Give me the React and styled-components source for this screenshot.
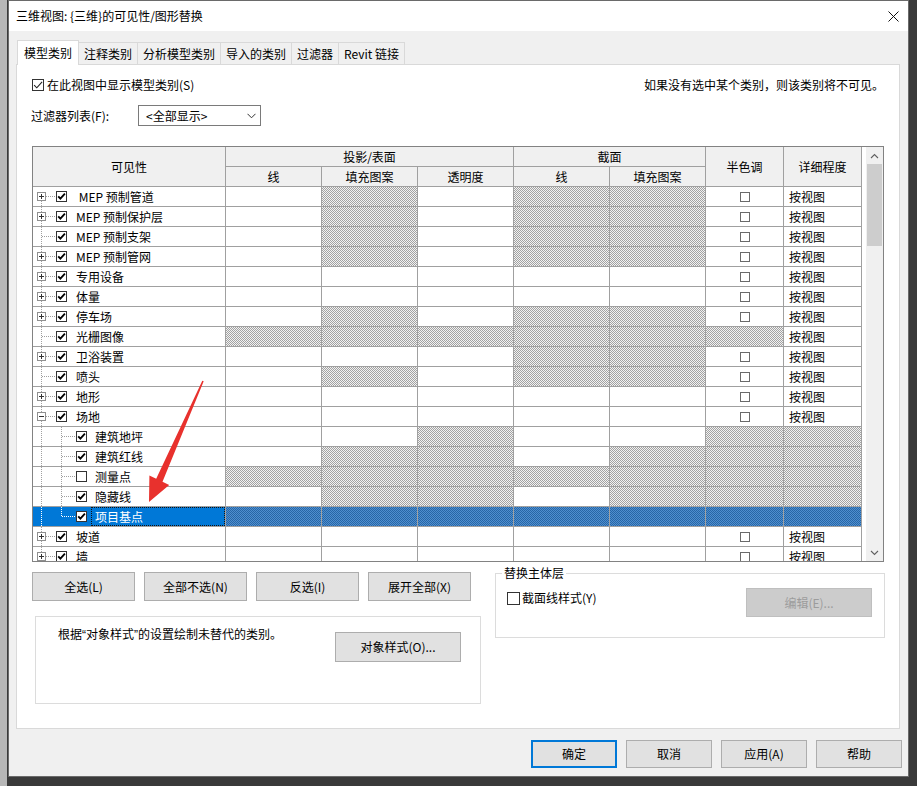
import React from 'react';
import styled, { createGlobalStyle, css } from 'styled-components';

const FONT = `"Noto Sans CJK SC", "Microsoft YaHei", "Noto Sans", sans-serif`;

const GlobalStyle = createGlobalStyle`
  *, *::before, *::after { box-sizing: border-box; }
  html, body { margin: 0; padding: 0; }
  body {
    width: 917px;
    height: 786px;
    overflow: hidden;
    background: linear-gradient(to right, #b7b7b7 0 7px, #3a3a3a 7px);
    font-family: ${FONT};
    font-size: 12px;
    color: #000;
  }
`;

const hatch = (a, b) => `repeating-conic-gradient(${a} 0 25%, ${b} 0 50%) 0 0 / 2px 2px`;
const GRAY_HATCH = hatch('#a2a2a2', '#f2f2f2');
const BLUE_HATCH = hatch('#2766a6', '#4f8fcf');
const COLS = '193px 96px 96px 96px 96px 96px 78px 78px';

const Desktop = styled.div`
  position: relative;
  width: 917px;
  height: 786px;
  padding-left: 8px;
`;

const Dialog = styled.div`
  width: 901px;
  height: 777px;
  border: 1px solid #6a6a6a;
  background: #f0f0f0;
  display: flex;
  flex-direction: column;
`;

const TitleBar = styled.div`
  flex: none;
  height: 30px;
  background: #fff;
  display: flex;
  align-items: center;
  justify-content: space-between;
  padding: 0 9px 0 7px;
  line-height: 16px;
`;

const DialogBody = styled.div`
  display: flex;
  flex-direction: column;
  padding: 9px 8px 0 7px;
`;

const TabStrip = styled.div`
  display: flex;
  align-items: flex-end;
  height: 24px;
  padding-left: 1px;
`;

const Tab = styled.div`
  position: relative;
  z-index: ${p => (p.$active ? 2 : 1)};
  display: flex;
  align-items: center;
  height: ${p => (p.$active ? 25 : 22)}px;
  margin-bottom: ${p => (p.$active ? -1 : 0)}px;
  margin-left: ${p => (p.$first ? 0 : -1)}px;
  padding: 0 ${p => (p.$active ? 6 : 5)}px;
  background: ${p => (p.$active ? '#fff' : '#f0f0f0')};
  border: 1px solid #d9d9d9;
  border-bottom: none;
  line-height: 16px;
  white-space: nowrap;
`;

const Panel = styled.div`
  height: 665px;
  background: #fff;
  border: 1px solid #d9d9d9;
  padding: 0 15px;
  display: flex;
  flex-direction: column;
`;

const TopRow = styled.div`
  margin-top: 10px;
  height: 20px;
  display: flex;
  align-items: center;
  justify-content: space-between;
  line-height: 16px;
`;

const CheckLabel = styled.label`
  display: flex;
  align-items: center;
  gap: ${p => p.$gap || 3}px;
  line-height: 16px;
  margin-top: ${p => p.$mt || 0}px;
`;

const Note = styled.span`
  padding-right: 0;
`;

const FilterRow = styled.div`
  margin-top: 10px;
  height: 21px;
  display: flex;
  align-items: center;
  line-height: 16px;
`;

const FilterLabel = styled.span`
  width: 107px;
  margin-left: -1px;
`;

const Select = styled.div`
  width: 123px;
  height: 21px;
  border: 1px solid #7a7a7a;
  background: #fff;
  display: flex;
  align-items: center;
  justify-content: space-between;
  padding: 0 4px 0 7px;
`;

const Box = styled.span`
  flex: none;
  display: inline-flex;
  align-items: center;
  justify-content: center;
  width: ${p => p.$size}px;
  height: ${p => p.$size}px;
  border: 1px solid ${p => p.$border || '#333'};
  background: #fff;
`;

/* ---------- table ---------- */

const TableFrame = styled.div`
  flex: none;
  margin-top: 20px;
  width: 852px;
  height: 416px;
  border: 1px solid #828282;
  background: #fff;
  display: flex;
`;

const GridArea = styled.div`
  width: 829px;
  display: flex;
  flex-direction: column;
  overflow: hidden;
`;

const HeaderGrid = styled.div`
  flex: none;
  display: grid;
  grid-template-columns: ${COLS};
  grid-template-rows: 20px 20px;
`;

const HeadCell = styled.div`
  grid-column: ${p => p.$col};
  grid-row: ${p => p.$row};
  background: #f0f0f0;
  border-right: 1px solid #a0a0a0;
  border-bottom: 1px solid #a0a0a0;
  display: flex;
  align-items: center;
  justify-content: center;
  line-height: 16px;
`;

const BodyRows = styled.div`
  flex: 1;
  overflow: hidden;
`;

const Row = styled.div`
  display: grid;
  grid-template-columns: ${COLS};
  height: 20px;
`;

const Cell = styled.div`
  border-right: 1px solid #a0a0a0;
  border-bottom: 1px solid #a0a0a0;
  display: flex;
  align-items: center;
  justify-content: ${p => (p.$center ? 'center' : 'flex-start')};
  padding-left: ${p => (p.$pad ? 5 : 0)}px;
  line-height: 16px;
  white-space: nowrap;
  ${p => p.$hatch && css`background: ${p.$selected ? BLUE_HATCH : GRAY_HATCH};`}
  ${p => !p.$hatch && css`background: ${p.$selected ? '#0078d7' : '#fff'};`}
`;

const VisCell = styled(Cell)`
  color: ${p => (p.$selected ? '#fff' : '#000')};
  overflow: hidden;
`;

const RowLabel = styled.span`
  flex: 1;
  align-self: stretch;
  display: flex;
  align-items: center;
  margin-left: ${p => (p.$focus ? 4 : 9)}px;
  padding-left: ${p => (p.$focus ? 3 : 0)}px;
  border: ${p => (p.$focus ? '1px dotted #111' : 'none')};
  ${p => p.$child && !p.$focus && css`margin-left: 8px;`}
`;

const GuideSvg = styled.svg`
  flex: none;
  display: block;
`;

const ScrollGap = styled.div`
  width: 4px;
  background: #fff;
`;

const ScrollBar = styled.div`
  width: 17px;
  background: #f0f0f0;
  display: flex;
  flex-direction: column;
`;

const ScrollArrow = styled.div`
  height: 17px;
  flex: none;
  display: flex;
  align-items: center;
  justify-content: center;
`;

const Thumb = styled.div`
  height: 82px;
  margin: 0 1px;
  background: #cdcdcd;
`;

const ScrollSpace = styled.div`
  flex: 1;
`;

/* ---------- lower area ---------- */

const Lower = styled.div`
  display: flex;
  margin-right: -1px;
`;

const LeftCol = styled.div`
  width: 449px;
  display: flex;
  flex-direction: column;
`;

const ButtonRow = styled.div`
  margin-top: 10px;
  display: flex;
  gap: 9px;
`;

const Btn = styled.button`
  flex: none;
  width: ${p => p.$w}px;
  height: ${p => p.$h}px;
  padding: 0;
  font-family: ${FONT};
  font-size: 12px;
  line-height: 16px;
  color: #000;
  background: #e1e1e1;
  border: ${p => (p.$default ? '2px solid #0078d7' : '1px solid #adadad')};
  &:disabled {
    background: #cccccc;
    border-color: #bfbfbf;
    color: #9c9c9c;
  }
`;

const InfoBox = styled.div`
  margin: 15px 0 0 3px;
  width: 446px;
  height: 88px;
  border: 1px solid #dcdcdc;
  display: flex;
  align-items: flex-start;
  padding: 0 19px 0 22px;
`;

const InfoText = styled.div`
  padding-top: 9px;
  line-height: 16px;
`;

const Quote = styled.span`
  font-family: "Liberation Sans", Arial, sans-serif;
`;

const InfoButton = styled(Btn)`
  margin-top: 15px;
  margin-left: auto;
`;

const RightCol = styled.div`
  margin-left: 14px;
  width: 390px;
`;

const Group = styled.fieldset`
  margin: 4px 0 0 0;
  padding: 8px 12px 0 11px;
  min-inline-size: 0;
  width: 390px;
  height: 72px;
  border: 1px solid #dcdcdc;
`;

const GroupLegend = styled.legend`
  padding: 0 2px;
  margin-left: -5px;
  font-size: 12px;
  line-height: 14px;
`;

const GroupRow = styled.div`
  display: flex;
  justify-content: space-between;
  align-items: flex-start;
`;

const Footer = styled.div`
  margin-top: 11px;
  margin-right: -2px;
  height: 28px;
  display: flex;
  justify-content: flex-end;
  gap: 9px;
`;

const ArrowOverlay = styled.svg`
  position: absolute;
  left: 140px;
  top: 375px;
  pointer-events: none;
  overflow: visible;
`;

/* ---------- pieces ---------- */

function Check({ checked, size = 11, bold = true, border }) {
  const inner = size - 2;
  return (
    <Box $size={size} $border={border}>
      {checked && (
        <svg width={inner} height={inner} viewBox="0 0 9 9">
          {bold ? (
            <path d="M1.2 4.3 L3.4 6.7 L7.9 1.6" fill="none" stroke="#000" strokeWidth="1.8" />
          ) : (
            <path d="M1 4.6 L3.4 7 L8.2 1.6" fill="none" stroke="#222" strokeWidth="1" />
          )}
        </svg>
      )}
    </Box>
  );
}

function TopGuide({ first, exp, trunkOnly, color }) {
  const dot = { stroke: color, strokeDasharray: '1 1', shapeRendering: 'crispEdges' };
  return (
    <GuideSvg width="23" height="19">
      <line x1="8.5" y1={first ? 9.5 : 0} x2="8.5" y2="19" {...dot} />
      {!trunkOnly && <line x1={exp ? 13 : 9} y1="9.5" x2="23" y2="9.5" {...dot} />}
      {exp && (
        <g shapeRendering="crispEdges">
          <rect x="4.5" y="5.5" width="8" height="8" fill="#fff" stroke="#8f8f8f" />
          <line x1="6" y1="9.5" x2="11" y2="9.5" stroke="#333" />
          {exp === '+' && <line x1="8.5" y1="7" x2="8.5" y2="12" stroke="#333" />}
        </g>
      )}
    </GuideSvg>
  );
}

function ChildGuide({ last, color }) {
  const dot = { stroke: color, strokeDasharray: '1 1', shapeRendering: 'crispEdges' };
  return (
    <GuideSvg width="20" height="19">
      <line x1="5.5" y1="0" x2="5.5" y2={last ? 9.5 : 19} {...dot} />
      <line x1="6" y1="9.5" x2="20" y2="9.5" {...dot} />
    </GuideSvg>
  );
}

const rows = [
  { label: '\u00a0MEP 预制管道', exp: '+', hatch: [1, 3, 4] },
  { label: 'MEP 预制保护层', exp: '+', hatch: [1, 3, 4] },
  { label: 'MEP 预制支架', exp: null, hatch: [1, 3, 4] },
  { label: 'MEP 预制管网', exp: '+', hatch: [1, 3, 4] },
  { label: '专用设备', exp: '+', hatch: [] },
  { label: '体量', exp: '+', hatch: [] },
  { label: '停车场', exp: '+', hatch: [1, 3, 4] },
  { label: '光栅图像', exp: null, hatch: [0, 1, 2, 3, 4, 5] },
  { label: '卫浴装置', exp: '+', hatch: [3, 4] },
  { label: '喷头', exp: null, hatch: [1, 3, 4] },
  { label: '地形', exp: '+', hatch: [] },
  { label: '场地', exp: '-', hatch: [] },
  { label: '建筑地坪', child: true, hatch: [2, 5, 6] },
  { label: '建筑红线', child: true, hatch: [1, 2, 4, 5, 6] },
  { label: '测量点', child: true, unchecked: true, hatch: [0, 1, 2, 3, 4, 5, 6] },
  { label: '隐藏线', child: true, hatch: [1, 2, 4, 5, 6] },
  { label: '项目基点', child: true, last: true, selected: true, hatch: [0, 1, 2, 3, 4, 5, 6] },
  { label: '坡道', exp: '+', hatch: [] },
  { label: '墙', exp: '+', hatch: [] },
];

const headCells = [
  { col: '1', row: '1 / 3', text: '可见性' },
  { col: '2 / 5', row: '1', text: '投影/表面' },
  { col: '5 / 7', row: '1', text: '截面' },
  { col: '7', row: '1 / 3', text: '半色调' },
  { col: '8', row: '1 / 3', text: '详细程度' },
  { col: '2', row: '2', text: '线' },
  { col: '3', row: '2', text: '填充图案' },
  { col: '4', row: '2', text: '透明度' },
  { col: '5', row: '2', text: '线' },
  { col: '6', row: '2', text: '填充图案' },
];

const tabs = ['模型类别', '注释类别', '分析模型类别', '导入的类别', '过滤器', 'Revit 链接'];

function TableRow({ r, index }) {
  const sel = !!r.selected;
  const lineColor = sel ? '#ffffff' : '#a0a0a0';
  const h = i => r.hatch.includes(i);
  return (
    <Row>
      <VisCell $selected={sel}>
        <TopGuide first={index === 0} exp={r.child ? null : r.exp} trunkOnly={r.child} color={lineColor} />
        {r.child && <ChildGuide last={r.last} color={lineColor} />}
        <Check checked={!r.unchecked} />
        <RowLabel $focus={sel} $child={r.child}>{r.label}</RowLabel>
      </VisCell>
      {[0, 1, 2, 3, 4].map(i => (
        <Cell key={i} $hatch={h(i)} $selected={sel} />
      ))}
      <Cell $hatch={h(5)} $selected={sel} $center>
        {!h(5) && <Check size={10} border="#6a6a6a" />}
      </Cell>
      <Cell $hatch={h(6)} $selected={sel} $pad>
        {!h(6) && '按视图'}
      </Cell>
    </Row>
  );
}

export default function App() {
  return (
    <>
      <GlobalStyle />
      <Desktop>
        <Dialog>
          <TitleBar>
            <span>三维视图: {'{三维}'}的可见性/图形替换</span>
            <svg width="11" height="11" viewBox="0 0 11 11">
              <path d="M0.5 0.5 L10.5 10.5 M10.5 0.5 L0.5 10.5" stroke="#111" strokeWidth="1" />
            </svg>
          </TitleBar>
          <DialogBody>
            <TabStrip>
              {tabs.map((t, i) => (
                <Tab key={t} $active={i === 0} $first={i === 0}>{t}</Tab>
              ))}
            </TabStrip>
            <Panel>
              <TopRow>
                <CheckLabel $gap={3}>
                  <Check checked size={12} bold={false} border="#333" />
                  在此视图中显示模型类别(S)
                </CheckLabel>
                <Note>如果没有选中某个类别，则该类别将不可见。</Note>
              </TopRow>
              <FilterRow>
                <FilterLabel>过滤器列表(F):</FilterLabel>
                <Select>
                  <span>&lt;全部显示&gt;</span>
                  <svg width="9" height="6" viewBox="0 0 9 6">
                    <path d="M0.5 0.8 L4.5 4.8 L8.5 0.8" fill="none" stroke="#333" strokeWidth="1" />
                  </svg>
                </Select>
              </FilterRow>

              <TableFrame>
                <GridArea>
                  <HeaderGrid>
                    {headCells.map((c, i) => (
                      <HeadCell key={i} $col={c.col} $row={c.row}>{c.text}</HeadCell>
                    ))}
                  </HeaderGrid>
                  <BodyRows>
                    {rows.map((r, i) => (
                      <TableRow key={i} r={r} index={i} />
                    ))}
                  </BodyRows>
                </GridArea>
                <ScrollGap />
                <ScrollBar>
                  <ScrollArrow>
                    <svg width="9" height="6" viewBox="0 0 9 6">
                      <path d="M1 5 L4.5 1.5 L8 5" fill="none" stroke="#606060" strokeWidth="1.1" />
                    </svg>
                  </ScrollArrow>
                  <Thumb />
                  <ScrollSpace />
                  <ScrollArrow>
                    <svg width="9" height="6" viewBox="0 0 9 6">
                      <path d="M1 1 L4.5 4.5 L8 1" fill="none" stroke="#606060" strokeWidth="1.1" />
                    </svg>
                  </ScrollArrow>
                </ScrollBar>
              </TableFrame>

              <Lower>
                <LeftCol>
                  <ButtonRow>
                    <Btn $w={103} $h={29}>全选(L)</Btn>
                    <Btn $w={103} $h={29}>全部不选(N)</Btn>
                    <Btn $w={103} $h={29}>反选(I)</Btn>
                    <Btn $w={103} $h={29}>展开全部(X)</Btn>
                  </ButtonRow>
                  <InfoBox>
                    <InfoText>
                      根据<Quote>“</Quote>对象样式<Quote>”</Quote>的设置绘制未替代的类别。
                    </InfoText>
                    <InfoButton $w={126} $h={30}>对象样式(O)...</InfoButton>
                  </InfoBox>
                </LeftCol>
                <RightCol>
                  <Group>
                    <GroupLegend>替换主体层</GroupLegend>
                    <GroupRow>
                      <CheckLabel $gap={2} $mt={2}>
                        <Check size={13} border="#333" />
                        截面线样式(Y)
                      </CheckLabel>
                      <Btn $w={126} $h={29} disabled>编辑(E)...</Btn>
                    </GroupRow>
                  </Group>
                </RightCol>
              </Lower>
            </Panel>

            <Footer>
              <Btn $w={86} $h={28} $default>确定</Btn>
              <Btn $w={86} $h={28}>取消</Btn>
              <Btn $w={86} $h={28}>应用(A)</Btn>
              <Btn $w={86} $h={28}>帮助</Btn>
            </Footer>
          </DialogBody>
        </Dialog>

        <ArrowOverlay width="70" height="130" viewBox="0 0 70 130">
          <polygon
            points="62.3,5.7 63.7,6.3 22.5,106.8 29.2,110 9,127 9.4,100.6 16.2,103.8"
            fill="#e8312d"
          />
        </ArrowOverlay>
      </Desktop>
    </>
  );
}
